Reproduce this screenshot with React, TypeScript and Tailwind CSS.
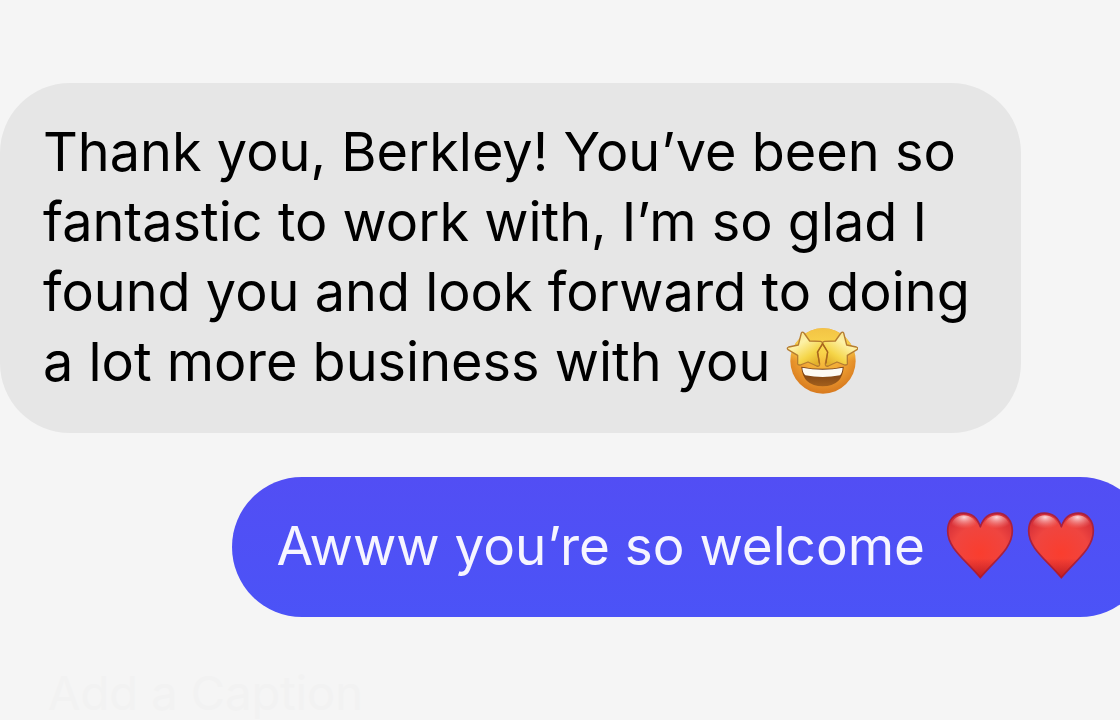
import { useId } from 'react';
import type { ReactNode } from 'react';

const STAR = 'M88 50 Q91 45 96 50 L113 74 L145 75 Q154 77 150 85 L136 107 L143 143 Q143 152 134 149 L108 137 L85 146 Q75 147 77 138 L77 117 L48 100 Q43 95 50 92 L79 86 Z';
const HEART = 'M151 169 C142 142 123 128 100 128 C71 128 53 151 53 181 C53 235 108 269 151 322 C194 269 247 235 247 181 C247 151 229 128 202 128 C179 128 160 142 151 169 Z';

function StarStruckEmoji() {
  const id = useId();

  return (
    <svg
      role="img"
      aria-label="star-struck"
      viewBox="42 32 216 204"
      className="inline-block h-[68px] w-[72px] align-[-14px]"
    >
      <defs>
        <radialGradient id={`${id}-face`} cx="0.5" cy="0.36" r="0.62">
          <stop offset="0" stopColor="#f9cf45" />
          <stop offset="0.6" stopColor="#f0a233" />
          <stop offset="1" stopColor="#d97c20" />
        </radialGradient>
        <linearGradient id={`${id}-top`} x1="0" y1="0" x2="0" y2="1">
          <stop offset="0" stopColor="#f3c445" />
          <stop offset="0.3" stopColor="#fadb50" stopOpacity="0.8" />
          <stop offset="0.5" stopColor="#f9d34b" stopOpacity="0" />
        </linearGradient>
        <linearGradient id={`${id}-star`} x1="0" y1="0" x2="0.7" y2="1">
          <stop offset="0" stopColor="#f6dc80" />
          <stop offset="0.4" stopColor="#fdf1a6" />
          <stop offset="0.75" stopColor="#f5d548" />
          <stop offset="1" stopColor="#e3b02b" />
        </linearGradient>
        <linearGradient id={`${id}-mouth`} x1="0" y1="0" x2="0" y2="1">
          <stop offset="0" stopColor="#6b3510" />
          <stop offset="1" stopColor="#a4601c" />
        </linearGradient>
      </defs>
      <circle cx="153" cy="134" r="98" fill={`url(#${id}-face)`} />
      <circle cx="153" cy="134" r="98" fill={`url(#${id}-top)`} />
      <path d="M88 151 Q152 164 215 151 Q212 209 152 210 Q92 209 88 151 Z" fill={`url(#${id}-mouth)`} />
      <path d="M91 154 Q152 166 212 154 Q211 170 204 177 Q152 187 100 177 Q92 170 91 154 Z" fill="#fdfbf4" />
      <path d={STAR} fill={`url(#${id}-star)`} stroke="#b57c30" strokeWidth="4" strokeLinejoin="round" />
      <g transform="matrix(-1 0 0 1 303 0)">
        <path d={STAR} fill={`url(#${id}-star)`} stroke="#b57c30" strokeWidth="4" strokeLinejoin="round" />
      </g>
      <path
        d="M152 82 L137 107 L142 140 M152 82 L167 107 L162 140"
        fill="none"
        stroke="#a8651c"
        strokeWidth="4"
        strokeLinecap="round"
        strokeLinejoin="round"
      />
    </svg>
  );
}

function HeartEmoji() {
  const id = useId();

  return (
    <svg role="img" aria-label="red heart" viewBox="48 122 204 206" className="h-[69px] w-[68px]">
      <defs>
        <radialGradient id={`${id}-fill`} cx="0.5" cy="0.62" r="0.66">
          <stop offset="0" stopColor="#fa3d2e" />
          <stop offset="0.65" stopColor="#ef4540" />
          <stop offset="1" stopColor="#d52f38" />
        </radialGradient>
        <linearGradient id={`${id}-tip`} x1="0" y1="0" x2="0" y2="1">
          <stop offset="0.7" stopColor="#b3121a" stopOpacity="0" />
          <stop offset="1" stopColor="#b3121a" stopOpacity="0.8" />
        </linearGradient>
        <radialGradient id={`${id}-shine`} cx="0.5" cy="0.12" r="0.62">
          <stop offset="0" stopColor="#ffe9ea" stopOpacity="0.9" />
          <stop offset="0.5" stopColor="#fbb0ae" stopOpacity="0.5" />
          <stop offset="1" stopColor="#f98a85" stopOpacity="0" />
        </radialGradient>
      </defs>
      <path
        d={HEART}
        fill={`url(#${id}-fill)`}
        stroke="#a8213f"
        strokeWidth="5"
        strokeLinejoin="round"
      />
      <path d={HEART} fill={`url(#${id}-tip)`} />
      <path d="M61 178 C62 150 80 134 101 134 C121 134 137 147 144 169 C120 192 84 194 61 178 Z" fill={`url(#${id}-shine)`} />
      <path d="M241 178 C240 150 222 134 201 134 C181 134 165 147 158 169 C182 192 218 194 241 178 Z" fill={`url(#${id}-shine)`} />
    </svg>
  );
}

function ReceivedMessage({ children }: { children: ReactNode }) {
  return (
    <div className="self-start rounded-[70px] bg-[#e6e6e6] pt-[34px] pr-[51px] pb-9 pl-[43px] text-[54px] text-black">
      {children}
    </div>
  );
}

function SentMessage({ children }: { children: ReactNode }) {
  return (
    <div className="-mr-[30px] flex self-end rounded-full bg-linear-to-b from-[#524ef4] to-[#4b53f7] pt-[34px] pr-[55px] pb-9 pl-[45px] text-[53px] text-[#f6f5ff]">
      {children}
    </div>
  );
}

export default function App() {
  return (
    <main className="flex min-h-screen flex-col overflow-hidden bg-[#f5f5f5] pt-[83px] font-['Inter',sans-serif] leading-[70px]">
      <ReceivedMessage>
        <p>
          Thank you, Berkley! You’ve been so
          <br />
          fantastic to work with, I’m so glad I
          <br />
          found you and look forward to doing
          <br />
          a lot more business with you <StarStruckEmoji />
        </p>
      </ReceivedMessage>
      <div className="h-11" />
      <SentMessage>
        <p className="whitespace-nowrap">Awww you’re so welcome</p>
        <span className="ml-[21px] flex gap-[13px]">
          <HeartEmoji />
          <HeartEmoji />
        </span>
      </SentMessage>
      <p className="mt-[50px] pl-12 text-[47px] leading-[52px] text-[#f2f2f2]">Add a Caption</p>
    </main>
  );
}
